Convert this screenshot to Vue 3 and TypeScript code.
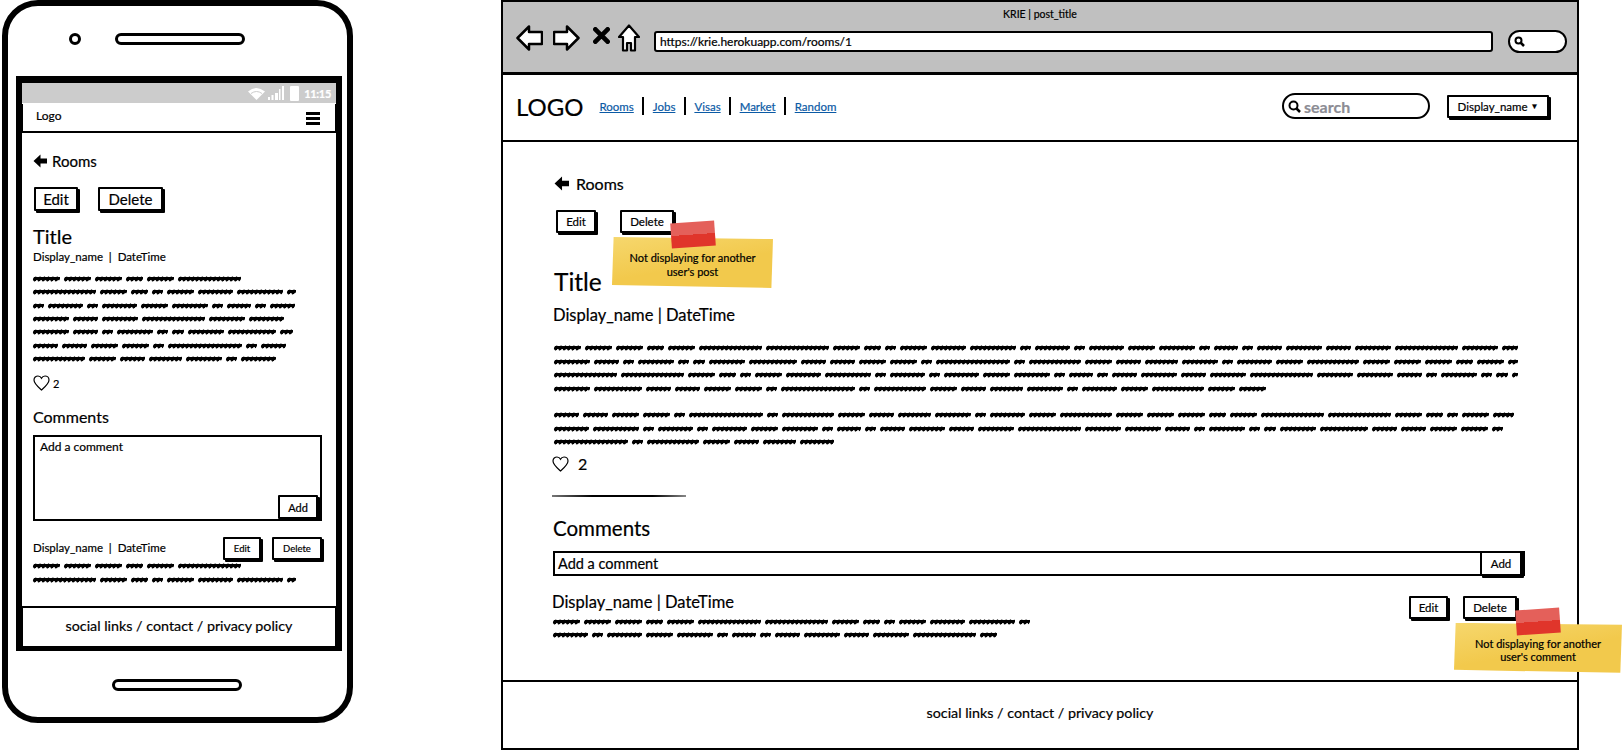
<template>
  <div class="canvas">
    <!-- Мобильный макет -->
    <section class="phone">
      <div class="phone-top">
        <span class="camera"></span>
        <span class="speaker"></span>
      </div>

      <div class="screen">
        <div class="status">
          <svg width="17" height="13" viewBox="0 0 17 13">
            <path d="M0 4.5 Q8.5 -2.500 17 4.500 L8.500 13 Z" fill="#fff" />
            <path d="M3 6.500 Q8.500 2.500 14 6.500" fill="none" stroke="#ccc" />
          </svg>
          <svg width="16" height="14" viewBox="0 0 16 14" class="signal">
            <path d="M0 11h2v3H0zM3.500 9h2v5h-2zM7 7h3v7H7zM11 3h1.500v11H11zM14 0h2v14h-2z" fill="#fff" />
          </svg>
          <span class="battery"></span>
          <span class="clock">11:15</span>
        </div>

        <div class="m-nav">
          <span class="m-logo">Logo</span>
          <span class="burger"><i></i><i></i><i></i></span>
        </div>

        <div class="m-content">
          <a class="back m-back">
            <svg width="14" height="14" viewBox="0 0 14 14">
              <path d="M7.500 .5 L.5 7 L7.500 13.500 V9.500 H14 V4.500 H7.500 Z" fill="#000" />
            </svg>
            Rooms
          </a>

          <div class="m-actions">
            <button class="btn m-edit">Edit</button>
            <button class="btn m-delete">Delete</button>
          </div>

          <h1 class="m-title">Title</h1>
          <p class="m-meta">Display_name &nbsp;|&nbsp; DateTime</p>

          <div class="scribble m-text">
            <div v-for="(row, i) in phoneBody" :key="i" class="line">
              <span v-for="(w, j) in row" :key="j" class="word" :style="{ width: w + 'px' }"></span>
            </div>
          </div>

          <div class="likes m-likes">
            <svg width="17" height="16" viewBox="0 0 17 16">
              <path d="M8.500 15 C4 11 1 8.500 1 5 C1 2.500 3 1 5 1 C6.500 1 7.800 1.800 8.500 3.200 C9.200 1.800 10.500 1 12 1 C14 1 16 2.500 16 5 C16 8.500 13 11 8.500 15 Z" fill="none" stroke="#000" stroke-width="1.200" />
            </svg>
            <span>2</span>
          </div>

          <h2 class="m-comments">Comments</h2>

          <div class="m-box">
            Add a comment
            <button class="btn m-add">Add</button>
          </div>

          <div class="m-comment">
            <span class="m-meta">Display_name &nbsp;|&nbsp; DateTime</span>
            <div class="m-comment-actions">
              <button class="btn tiny m-cedit">Edit</button>
              <button class="btn tiny m-cdelete">Delete</button>
            </div>
          </div>
          <div class="scribble m-ctext">
            <div v-for="(row, i) in phoneComment" :key="i" class="line">
              <span v-for="(w, j) in row" :key="j" class="word" :style="{ width: w + 'px' }"></span>
            </div>
          </div>
        </div>

        <div class="m-footer">social links / contact / privacy policy</div>
      </div>

      <div class="phone-bottom">
        <span class="speaker"></span>
      </div>
    </section>

    <!-- Десктопный макет -->
    <section class="browser">
      <div class="chrome">
        <div class="chrome-title">KRIE | post_title</div>
        <div class="toolbar">
          <svg width="27" height="26" viewBox="0 0 27 26">
            <path d="M1.500 13 L13 1.500 V7 H26 V19 H13 V24.500 Z" fill="#fff" stroke="#000" stroke-width="2.500" stroke-linejoin="round" />
          </svg>
          <svg class="t-forward" width="27" height="26" viewBox="0 0 27 26">
            <path d="M25.500 13 L14 1.500 V7 H1 V19 H14 V24.500 Z" fill="#fff" stroke="#000" stroke-width="2.500" stroke-linejoin="round" />
          </svg>
          <svg class="t-stop" width="17" height="17" viewBox="0 0 18 18">
            <path d="M2.500 2.500 L15.500 15.500 M15.500 2.500 L2.500 15.500" stroke="#000" stroke-width="5" stroke-linecap="round" />
          </svg>
          <svg class="t-home" width="22" height="28" viewBox="0 0 22 28">
            <path d="M11 1.500 L21 13 H17 V26.500 H13 V19 H9 V26.500 H5 V13 H1 Z" fill="#fff" stroke="#000" stroke-width="2.200" stroke-linejoin="round" />
          </svg>
          <div class="url">https://krie.herokuapp.com/rooms/1</div>
          <div class="t-search">
            <svg width="11" height="11" viewBox="0 0 11 11">
              <circle cx="4.500" cy="4.500" r="3" fill="none" stroke="#000" stroke-width="2" />
              <path d="M6.500 6.500 L10 10" stroke="#000" stroke-width="2.500" />
            </svg>
          </div>
        </div>
      </div>

      <header class="header">
        <span class="logo">LOGO</span>
        <nav class="links">
          <template v-for="(link, i) in links" :key="link">
            <i v-if="i > 0" class="sep"></i>
            <a href="#">{{ link }}</a>
          </template>
        </nav>
        <div class="search">
          <svg width="13" height="13" viewBox="0 0 13 13">
            <circle cx="5.500" cy="5.500" r="4" fill="none" stroke="#000" stroke-width="2" />
            <path d="M8.500 8.500 L12 12" stroke="#000" stroke-width="2.500" />
          </svg>
          <span>search</span>
        </div>
        <button class="btn user">Display_name <small>▼</small></button>
      </header>

      <main class="main">
        <a class="back d-back">
          <svg width="15" height="15" viewBox="0 0 14 14">
            <path d="M7.500 .5 L.5 7 L7.500 13.500 V9.500 H14 V4.500 H7.500 Z" fill="#000" />
          </svg>
          Rooms
        </a>

        <div class="d-actions">
          <button class="btn d-edit">Edit</button>
          <div class="noted">
            <button class="btn d-delete">Delete</button>
            <div class="sticky sticky-post">
              <span class="tape"></span>
              <span class="note">Not displaying for another<br />user's post</span>
            </div>
          </div>
        </div>

        <h1 class="d-title">Title</h1>
        <p class="d-meta">Display_name | DateTime</p>

        <div class="scribble d-text">
          <div v-for="(row, i) in desktopBody1" :key="i" class="line">
            <span v-for="(w, j) in row" :key="j" class="word" :style="{ width: w + 'px' }"></span>
          </div>
        </div>
        <div class="scribble d-text2">
          <div v-for="(row, i) in desktopBody2" :key="i" class="line">
            <span v-for="(w, j) in row" :key="j" class="word" :style="{ width: w + 'px' }"></span>
          </div>
        </div>

        <div class="likes d-likes">
          <svg width="17" height="16" viewBox="0 0 17 16">
            <path d="M8.500 15 C4 11 1 8.500 1 5 C1 2.500 3 1 5 1 C6.500 1 7.800 1.800 8.500 3.200 C9.200 1.800 10.500 1 12 1 C14 1 16 2.500 16 5 C16 8.500 13 11 8.500 15 Z" fill="none" stroke="#000" stroke-width="1.200" />
          </svg>
          <span>2</span>
        </div>

        <hr class="rule" />

        <h2 class="d-comments">Comments</h2>

        <div class="d-input">
          Add a comment
          <button class="btn d-add">Add</button>
        </div>

        <div class="d-comment">
          <p class="d-meta d-cmeta">Display_name | DateTime</p>
          <div class="d-comment-actions">
            <button class="btn d-cedit">Edit</button>
            <div class="noted">
              <button class="btn d-cdelete">Delete</button>
              <div class="sticky sticky-comment">
                <span class="tape"></span>
                <span class="note">Not displaying for another<br />user's comment</span>
              </div>
            </div>
          </div>
        </div>
        <div class="scribble d-ctext">
          <div v-for="(row, i) in desktopComment" :key="i" class="line">
            <span v-for="(w, j) in row" :key="j" class="word" :style="{ width: w + 'px' }"></span>
          </div>
        </div>
      </main>

      <footer class="d-footer">social links / contact / privacy policy</footer>
    </section>
  </div>
</template>

<script setup lang="ts">
const links = ['Rooms', 'Jobs', 'Visas', 'Market', 'Random']

// Ширины "слов" заглушки-текста, в том же порядке, что и на макете
const words = [
  27, 27, 27, 17, 27, 63, 63, 27, 17, 11, 27, 35, 46, 11, 35, 11, 35, 27, 36, 11, 24, 11, 25,
  36, 25, 36, 63, 36, 36, 25, 11, 36, 11, 12, 36, 48, 25, 25, 27, 27, 11, 74, 11, 52, 27, 25,
  33, 36, 11, 35, 27, 52,
]

// Режет поток слов на строки заданной ширины
const toRows = (start: number, widths: number[]) => {
  let index = start
  return widths.map((target) => {
    const row: number[] = []
    let used = 0
    while (true) {
      const next = words[index % words.length]
      if (used + next > target) break
      row.push(next)
      used += next + 4
      index++
    }
    if (target - used > 5) row.push(target - used)
    return row
  })
}

const phoneBody = toRows(0, [208, 263, 268, 251, 260, 253, 245])
const phoneComment = toRows(0, [208, 263])
const desktopBody1 = toRows(0, [964, 964, 964, 715])
const desktopBody2 = toRows(36, [960, 958, 280])
const desktopComment = toRows(0, [477, 444])
</script>

<style>
html,
body {
  margin: 0;
  background: #fff;
}
</style>

<style scoped>
.canvas {
  display: flex;
  align-items: flex-start;
  width: 1624px;
  height: 750px;
  overflow: hidden;
  padding-left: 2px;
  box-sizing: border-box;
  background: #fff;
  color: #000;
  font-family: Lato, "Open Sans", sans-serif;
  -webkit-text-stroke: 0.2px;
}

button {
  font-family: inherit;
  color: #000;
  -webkit-text-stroke: 0.2px;
}

h1,
h2,
p {
  margin: 0;
  font-weight: 400;
}

.btn {
  box-sizing: border-box;
  padding: 0;
  background: #fff;
  border: 2px solid #000;
  border-radius: 1px;
  box-shadow: 2px 2px 0 #000;
}

/* Телефон */
.phone {
  display: flex;
  flex-direction: column;
  flex: none;
  box-sizing: border-box;
  width: 351px;
  height: 723px;
  border: 6px solid #000;
  border-radius: 36px;
}

.phone-top {
  display: flex;
  align-items: center;
  gap: 34px;
  height: 70px;
  padding: 0 0 5px 61px;
  box-sizing: border-box;
}

.camera {
  width: 12px;
  height: 12px;
  box-sizing: border-box;
  border: 3px solid #000;
  border-radius: 50%;
}

.speaker {
  width: 130px;
  height: 12px;
  box-sizing: border-box;
  border: 3px solid #000;
  border-radius: 8px;
}

.phone-bottom {
  display: flex;
  justify-content: center;
  padding-top: 28px;
  margin-left: -1px;
}

.screen {
  display: flex;
  flex-direction: column;
  box-sizing: border-box;
  width: 326px;
  height: 575px;
  margin-left: 8px;
  border: 6px solid #000;
  border-top-width: 7px;
  border-bottom-width: 5px;
}

.status {
  display: flex;
  align-items: center;
  justify-content: flex-end;
  height: 20px;
  padding-right: 5px;
  background: #ccc;
  color: #fff;
}

.signal {
  margin-left: 3px;
}

.battery {
  width: 9px;
  height: 15px;
  margin-left: 6px;
  background: #fff;
  border-radius: 1px;
}

.clock {
  margin-left: 5px;
  font-size: 11px;
  font-weight: 700;
  letter-spacing: -0.3px;
}

.m-nav {
  display: flex;
  align-items: center;
  justify-content: space-between;
  box-sizing: border-box;
  height: 29px;
  margin-top: 1px;
  padding: 0 15px 4px 13px;
  border-bottom: 2px solid #000;
  border-right: 1px solid #000;
  border-left: 1px solid #000;
  font-size: 12px;
}

.burger {
  display: flex;
  flex-direction: column;
  gap: 2.500px;
  margin-top: 6px;
}

.burger i {
  width: 14px;
  height: 2.500px;
  background: #000;
}

.m-content {
  flex: 1;
  padding: 0 0 0 11px;
}

.back {
  display: flex;
  align-items: center;
  height: 20px;
  color: #000;
}

.m-back {
  gap: 5px;
  margin-top: 18px;
  font-size: 15px;
}

.m-actions {
  display: flex;
  gap: 20px;
  margin-top: 16px;
  padding-left: 1px;
}

.m-edit {
  width: 44px;
  height: 24px;
  font-size: 15px;
}

.m-delete {
  width: 65px;
  height: 24px;
  font-size: 15px;
}

.m-title {
  height: 24px;
  margin-top: 13px;
  font-size: 20px;
  line-height: 24px;
}

.m-meta {
  margin-top: 2px;
  font-size: 11.500px;
  line-height: 14px;
}

.line {
  display: flex;
  align-items: center;
  gap: 4px;
  height: 13.330px;
}

/* Заглушка текста: бугристая полоска */
.word {
  flex: none;
  height: 5.500px;
  border-radius: 3px;
  background:
    linear-gradient(#000, #000) center / 100% 3px no-repeat,
    radial-gradient(ellipse 2px 2.800px at center, #000 85%, transparent) 0 0 / 4.300px 100% repeat-x;
  transform: skewX(-15deg);
}

.m-text {
  margin-top: 8px;
}

.likes {
  display: flex;
  align-items: center;
}

.m-likes {
  gap: 3px;
  height: 16px;
  margin-top: 10px;
  font-size: 11px;
}

.m-comments {
  height: 20px;
  margin-top: 16px;
  font-size: 16px;
  line-height: 20px;
}

.m-box {
  position: relative;
  box-sizing: border-box;
  width: 289px;
  height: 86px;
  margin-top: 8px;
  padding: 2px 0 0 5px;
  border: 2px solid #000;
  font-size: 12px;
}

.m-add {
  position: absolute;
  right: 2px;
  bottom: 0;
  width: 40px;
  height: 24px;
  font-size: 11px;
}

.m-comment {
  display: flex;
  align-items: flex-start;
  justify-content: space-between;
  width: 289px;
  height: 22px;
  margin-top: 16px;
}

.m-comment .m-meta {
  margin-top: 4px;
}

.m-comment-actions {
  display: flex;
  gap: 11px;
}

.tiny {
  height: 23px;
  font-size: 9.500px;
}

.m-cedit {
  width: 38px;
}

.m-cdelete {
  width: 50px;
}

.m-footer {
  height: 40px;
  box-sizing: border-box;
  border-top: 2px solid #000;
  border-left: 1px solid #000;
  border-right: 1px solid #000;
  font-size: 14.300px;
  line-height: 36px;
  text-align: center;
}

/* Браузер */
.browser {
  position: relative;
  display: flex;
  flex-direction: column;
  flex: none;
  box-sizing: border-box;
  width: 1078px;
  height: 750px;
  margin-left: 148px;
  border: 2px solid #000;
}

.chrome {
  flex: none;
  box-sizing: border-box;
  height: 73px;
  background: #c0c0c0;
  border-bottom: 3px solid #000;
}

.chrome-title {
  padding-top: 6px;
  font-size: 10.500px;
  line-height: 12px;
  text-align: center;
}

.toolbar {
  display: flex;
  align-items: center;
  height: 29px;
  margin-top: 3px;
  padding-left: 13px;
}

.t-forward {
  margin-left: 10px;
}

.t-stop {
  margin: -4px 0 0 13px;
}

.t-home {
  margin-left: 8px;
}

.url {
  box-sizing: border-box;
  width: 839px;
  height: 21px;
  margin: 8px 0 0 14px;
  padding-left: 4px;
  background: #fff;
  border: 2px solid #000;
  border-radius: 3px;
  font-size: 12px;
  line-height: 17px;
}

.t-search {
  display: flex;
  align-items: center;
  box-sizing: border-box;
  width: 59px;
  height: 23px;
  margin: 7px 0 0 15px;
  padding-left: 4px;
  background: #fff;
  border: 2px solid #000;
  border-radius: 12px;
}

.header {
  display: flex;
  flex: none;
  align-items: center;
  box-sizing: border-box;
  height: 67px;
  padding: 0 28px 3px 13px;
  border-bottom: 2px solid #000;
}

.logo {
  font-size: 24px;
}

.links {
  display: flex;
  align-items: center;
  gap: 8.500px;
  margin-left: 16px;
  font-size: 11.500px;
}

.links a {
  color: #0b5aa5;
}

.sep {
  width: 2px;
  height: 18px;
  background: #000;
}

.search {
  display: flex;
  align-items: center;
  gap: 3px;
  box-sizing: border-box;
  width: 148px;
  height: 26px;
  margin-left: auto;
  padding-left: 4px;
  border: 2px solid #000;
  border-radius: 13px;
  color: #8c8c94;
  font-size: 16px;
  font-weight: 700;
}

.user {
  width: 102px;
  height: 23px;
  margin-left: 17px;
  font-size: 11.500px;
}

.user small {
  font-size: 8px;
  vertical-align: 2px;
}

.main {
  flex: 1;
  padding: 31px 51px 0;
}

.d-back {
  gap: 7px;
  font-size: 16px;
}

.d-actions {
  display: flex;
  gap: 24px;
  margin-top: 17px;
  padding-left: 2px;
}

.noted {
  position: relative;
}

.d-edit {
  width: 40px;
  height: 23px;
  font-size: 11.500px;
}

.d-delete {
  width: 54px;
  height: 23px;
  font-size: 11.500px;
}

.sticky {
  position: absolute;
  z-index: 2;
  box-sizing: border-box;
}

/* Жёлтый стикер с неровными краями */
.note {
  display: block;
  height: 100%;
  box-sizing: border-box;
  padding-top: 14px;
  background: linear-gradient(170deg, #f6d76d, #f2c94c 55%);
  clip-path: polygon(1% 0, 100% 4%, 99% 100%, 0 94%);
  font-size: 11px;
  line-height: 13.500px;
  text-align: center;
}

.tape {
  position: absolute;
  top: -15px;
  z-index: 3;
  display: block;
  width: 44px;
  height: 25px;
  background: linear-gradient(#e4605a 50%, #e0352b 50%);
  transform: rotate(-4deg);
}

.sticky-post {
  left: -8px;
  top: 27px;
  width: 161px;
  height: 51px;
}

.sticky-post .tape {
  left: 59px;
}

.sticky-comment {
  left: -9px;
  top: 27px;
  width: 168px;
  height: 50px;
}

.sticky-comment .tape {
  top: -14px;
  left: 62px;
}

.sticky-comment .note {
  line-height: 13px;
}

.d-title {
  height: 30px;
  margin-top: 34px;
  font-size: 24.500px;
  line-height: 30px;
}

.d-meta {
  height: 20px;
  margin: 8px 0 0 -1px;
  font-size: 16.500px;
  line-height: 20px;
}

.d-text {
  margin-top: 16px;
}

.d-text .line,
.d-text2 .line {
  height: 13.600px;
}

.d-text2 {
  margin-top: 12.700px;
}

.d-likes {
  gap: 9px;
  height: 18px;
  margin-top: 6px;
  margin-left: -2px;
  font-size: 16px;
}

.rule {
  width: 134px;
  height: 2px;
  margin: 22px 0 0 -2px;
  border: 0;
  background: linear-gradient(90deg, #777, #000 30%, #000 75%, #888);
}

.d-comments {
  height: 26px;
  margin: 18px 0 0 -1px;
  font-size: 20.500px;
  line-height: 26px;
}

.d-input {
  position: relative;
  box-sizing: border-box;
  width: 972px;
  height: 25px;
  margin-top: 10px;
  margin-left: -1px;
  padding-left: 3px;
  border: 2px solid #000;
  font-size: 14.500px;
  line-height: 21px;
}

.d-add {
  position: absolute;
  top: -2px;
  right: 1px;
  width: 42px;
  height: 25px;
  font-size: 11.500px;
  line-height: 1;
}

.d-comment {
  display: flex;
  align-items: flex-start;
  justify-content: space-between;
  height: 20px;
  margin-top: 19px;
  padding-right: 9px;
}

.d-cmeta {
  margin-top: -3px;
  margin-left: -2px;
}

.d-comment-actions {
  display: flex;
  gap: 15px;
  margin-top: 1px;
}

.d-cedit {
  width: 39px;
  height: 23px;
  font-size: 11.500px;
}

.d-cdelete {
  width: 54px;
  height: 23px;
  font-size: 11.500px;
}

.d-ctext {
  margin-left: -1px;
}

.d-footer {
  flex: none;
  box-sizing: border-box;
  height: 68px;
  border-top: 2px solid #000;
  font-size: 14.300px;
  line-height: 62px;
  text-align: center;
}
</style>
